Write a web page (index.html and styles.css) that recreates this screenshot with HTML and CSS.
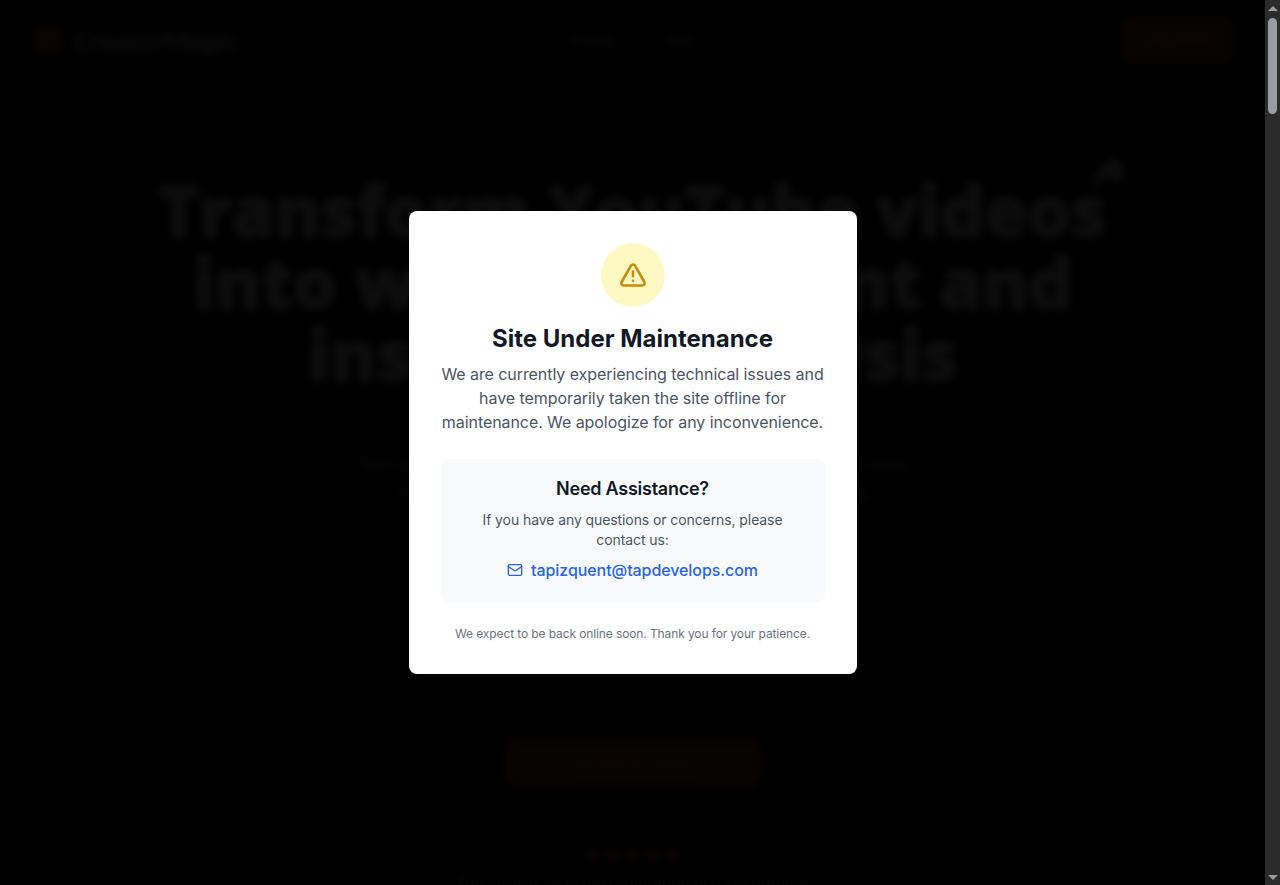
FILE: index.html
```html
<!DOCTYPE html>
<html lang="en">
<head>
<meta charset="utf-8">
<title>Site Under Maintenance</title>
<link rel="stylesheet" href="styles.css">
</head>
<body>
<div class="page">
  <div class="site">
    <header class="nav">
      <div class="brand">
        <span class="brand-mark">
          <svg width="14" height="14" viewBox="0 0 24 24" fill="none" stroke="currentColor" stroke-width="2"><path d="M6 20V10M12 20V4M18 20v-7"/></svg>
        </span>
        <span class="brand-name">CreatorMagic</span>
      </div>
      <nav class="nav-links"><a>Pricing</a><a>FAQ</a></nav>
      <a class="nav-cta">Get started</a>
    </header>
    <section class="hero">
      <h1 class="hero-title">Transform YouTube videos<br>into written content and<br>insightful analysis
        <svg class="hero-spark" width="36" height="36" viewBox="0 0 34 34" fill="currentColor"><path d="M1 33C3 18 12 5 23 1c4 3 3 9-2 12C14 17 8 26 1 33z"/><circle cx="24" cy="16" r="8"/></svg>
      </h1>
      <p class="hero-sub">Turn your videos into blog posts, summaries and comment reports using<br>the power of AI, and understand what your audience is saying</p>
      <a class="hero-cta">Start for free today</a>
      <div class="stars"><i></i><i></i><i></i><i></i><i></i></div>
      <p class="hero-note">The easiest view into your audience's sentiment</p>
    </section>
  </div>
  <div class="overlay">
    <div class="modal">
      <div class="modal-icon">
        <svg width="28" height="28" viewBox="0 0 24 24" fill="none" stroke="currentColor" stroke-width="2.2" stroke-linecap="round" stroke-linejoin="round"><path d="m21.73 18-8-14a2 2 0 0 0-3.48 0l-8 14A2 2 0 0 0 4 21h16a2 2 0 0 0 1.73-3"/><path d="M12 9v4"/><path d="M12 17h.01"/></svg>
      </div>
      <h2 class="modal-title">Site Under Maintenance</h2>
      <p class="modal-text">We are currently experiencing technical issues and have temporarily taken the site offline for maintenance. We apologize for any inconvenience.</p>
      <div class="help">
        <h3 class="help-title">Need Assistance?</h3>
        <p class="help-text">If you have any questions or concerns, please contact us:</p>
        <a class="help-link" href="mailto:tapizquent@tapdevelops.com">
          <svg width="16" height="16" viewBox="0 0 24 24" fill="none" stroke="currentColor" stroke-width="2" stroke-linecap="round" stroke-linejoin="round"><rect x="2" y="4" width="20" height="16" rx="2"/><path d="m22 7-8.97 5.7a1.94 1.94 0 0 1-2.06 0L2 7"/></svg>
          <span>tapizquent@tapdevelops.com</span>
        </a>
      </div>
      <p class="modal-foot">We expect to be back online soon. Thank you for your patience.</p>
    </div>
  </div>
</div>
<div class="scrollbar" aria-hidden="true">
  <span class="arrow-up"></span>
  <span class="thumb"></span>
  <span class="arrow-down"></span>
</div>
</body>
</html>
```
FILE: styles.css
```css
* { box-sizing: border-box; }
html, body { height: 100%; }
body {
  margin: 0;
  display: flex;
  height: 885px;
  overflow: hidden;
  background: #000;
  font-family: "Inter", "Liberation Sans", sans-serif;
}
.page {
  position: relative;
  flex: 1;
  min-width: 0;
  overflow: hidden;
}
.site { color: #fff; font-family: "Lato", sans-serif; }
.nav {
  height: 80px;
  padding: 15px 31px 15px 33px;
  display: flex;
  align-items: center;
}
.brand { display: flex; align-items: center; gap: 10px; }
.brand-mark {
  width: 30px; height: 30px; border-radius: 8px;
  background: #b04a30; color: #fff;
  display: flex; align-items: center; justify-content: center;
}
.brand-name { font-size: 27px; font-weight: 700; }
.nav-links { display: flex; gap: 52px; font-size: 15px; margin-left: 333px; }
.nav-cta {
  margin-left: auto;
  width: 112px; height: 51px; border-radius: 12px;
  background: #a04a30; color: #d8a090; font-size: 13px;
  display: flex; align-items: center; justify-content: center;
}
.hero { display: flex; flex-direction: column; align-items: center; padding-top: 94px; }
.hero-title {
  position: relative;
  margin: 0;
  font-family: "Open Sans", sans-serif;
  font-size: 70px;
  font-weight: 800;
  line-height: 72px;
  text-align: center;
  letter-spacing: -.6px;
  -webkit-text-stroke: 1.5px #fff;
}
.hero-spark { position: absolute; right: -20px; top: -18px; }
.hero-sub {
  margin: 60px 0 0;
  font-size: 17.5px;
  line-height: 28px;
  text-align: center;
  white-space: nowrap;
}
.hero-cta {
  margin-top: 231px;
  width: 258px; height: 51px; border-radius: 14px;
  background: #a04a30; color: #d8a090; font-size: 13px;
  display: flex; align-items: center; justify-content: center;
}
.stars { display: flex; gap: 5px; margin-top: 59px; }
.stars i { width: 15px; height: 15px; border-radius: 50%; background: #b06050; }
.hero-note { margin: 9px 0 0; font-size: 17px; opacity: .6; }

.overlay {
  position: absolute;
  inset: 0;
  display: flex;
  align-items: center;
  justify-content: center;
  background: rgba(0, 0, 0, .95);
  backdrop-filter: blur(4px);
}
.modal {
  width: 448px;
  padding: 32px;
  border-radius: 8px;
  background: #fff;
  display: flex;
  flex-direction: column;
  align-items: center;
  text-align: center;
}
.modal-icon {
  width: 64px; height: 64px; border-radius: 50%;
  background: #fef9c3; color: #ca8a04;
  display: flex; align-items: center; justify-content: center;
}
.modal-title {
  margin: 16px 0 0;
  font-size: 24px; line-height: 32px; font-weight: 700;
  color: #111827;
}
.modal-text {
  margin: 7px 0 0;
  font-size: 16px; line-height: 24px;
  letter-spacing: -.07px;
  color: #4b5563;
}
.help {
  align-self: stretch;
  margin-top: 25px;
  padding: 16px 16px 20px;
  border-radius: 8px;
  background: #f9fafb;
}
.help-title {
  margin: 0;
  font-size: 18px; line-height: 28px; font-weight: 600;
  letter-spacing: -.25px;
  color: #111827;
}
.help-text {
  margin: 7px 0 0;
  font-size: 14px; line-height: 20px;
  letter-spacing: -.09px;
  color: #4b5563;
}
.help-link {
  margin-top: 8px;
  display: flex; align-items: center; justify-content: center; gap: 8px;
  font-size: 16px; line-height: 24px; font-weight: 500;
  letter-spacing: -.08px;
  color: #2563eb;
  text-decoration: none;
}
.modal-foot {
  margin: 24px 0 0;
  font-size: 12px; line-height: 16px;
  letter-spacing: -.11px;
  color: #6b7280;
}
.scrollbar {
  flex: 0 0 15px;
  background: #2b2b2b;
  display: flex;
  flex-direction: column;
  align-items: center;
  padding: 6px 0 5px;
}
.arrow-up, .arrow-down {
  width: 0; height: 0;
  border-left: 5px solid transparent;
  border-right: 5px solid transparent;
}
.arrow-up { border-bottom: 5px solid #9a9ca0; }
.arrow-down { border-top: 5px solid #9a9ca0; margin-top: auto; }
.thumb {
  width: 9px; height: 96px; margin-top: 7px;
  border-radius: 5px;
  background: #9a9ca0;
}
```
